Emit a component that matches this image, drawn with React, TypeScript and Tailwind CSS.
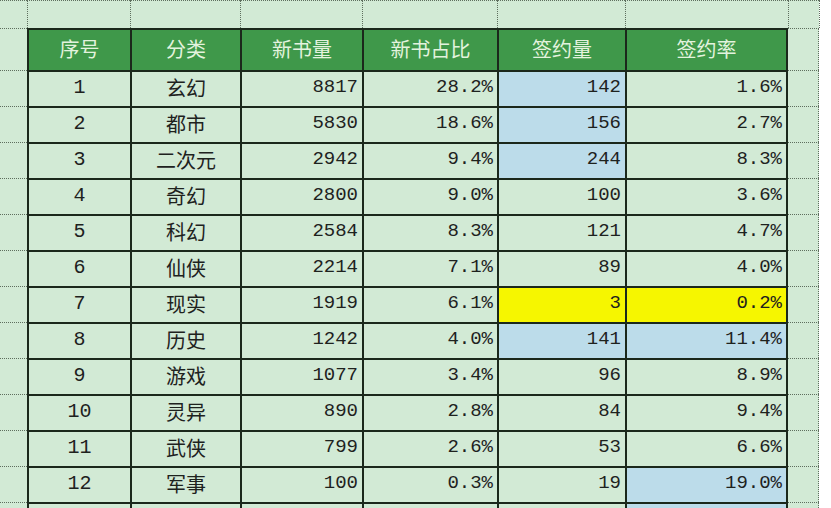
const ROWS = [
  { no: '1', cat: '玄幻', count: '8817', share: '28.2%', signed: '142', rate: '1.6%', signedBg: 'blue', rateBg: '' },
  { no: '2', cat: '都市', count: '5830', share: '18.6%', signed: '156', rate: '2.7%', signedBg: 'blue', rateBg: '' },
  { no: '3', cat: '二次元', count: '2942', share: '9.4%', signed: '244', rate: '8.3%', signedBg: 'blue', rateBg: '' },
  { no: '4', cat: '奇幻', count: '2800', share: '9.0%', signed: '100', rate: '3.6%', signedBg: '', rateBg: '' },
  { no: '5', cat: '科幻', count: '2584', share: '8.3%', signed: '121', rate: '4.7%', signedBg: '', rateBg: '' },
  { no: '6', cat: '仙侠', count: '2214', share: '7.1%', signed: '89', rate: '4.0%', signedBg: '', rateBg: '' },
  { no: '7', cat: '现实', count: '1919', share: '6.1%', signed: '3', rate: '0.2%', signedBg: 'yellow', rateBg: 'yellow' },
  { no: '8', cat: '历史', count: '1242', share: '4.0%', signed: '141', rate: '11.4%', signedBg: 'blue', rateBg: 'blue' },
  { no: '9', cat: '游戏', count: '1077', share: '3.4%', signed: '96', rate: '8.9%', signedBg: '', rateBg: '' },
  { no: '10', cat: '灵异', count: '890', share: '2.8%', signed: '84', rate: '9.4%', signedBg: '', rateBg: '' },
  { no: '11', cat: '武侠', count: '799', share: '2.6%', signed: '53', rate: '6.6%', signedBg: '', rateBg: '' },
  { no: '12', cat: '军事', count: '100', share: '0.3%', signed: '19', rate: '19.0%', signedBg: '', rateBg: 'blue' },
  { no: '', cat: '', count: '', share: '', signed: '', rate: '', signedBg: '', rateBg: 'blue' },
];

const HEADERS = ['序号', '分类', '新书量', '新书占比', '签约量', '签约率'];

const fill = (bg: string) =>
  bg === 'blue' ? 'bg-[#bcdcea]' : bg === 'yellow' ? 'bg-[#f6f600]' : 'bg-[#d2ead5]';

const mono = { fontFamily: '"Liberation Mono", "DejaVu Sans Mono", monospace' };

function Gutter() {
  return <div className="border-t border-dotted border-[#5e6e5e] bg-[#d2ead5]" />;
}

function Side() {
  return <div className="border-t border-r border-dotted border-[#5e6e5e] bg-[#d2ead5]" />;
}

function Cell({
  children,
  align = 'center',
  bg = '',
  last = false,
  num = false,
}: {
  children?: React.ReactNode;
  align?: 'center' | 'right';
  bg?: string;
  last?: boolean;
  num?: boolean;
}) {
  return (
    <div
      className={`flex items-center border-t-2 border-l-2 border-[#1b281b] text-[#1e221e] ${fill(bg)} ${
        last ? 'border-r-2' : ''
      } ${align === 'right' ? 'justify-end pr-[4px] text-[19px]' : 'justify-center text-[20px]'} pb-[3px]`}
      style={num ? mono : undefined}
    >
      {children}
    </div>
  );
}

export default function App() {
  return (
    <div
      className="grid h-[508px] w-[831px] overflow-hidden bg-white grid-cols-[27px_103px_110px_122px_135px_128px_163px_31px_12px] grid-rows-[28px_42px_repeat(12,36px)_6px]"
      style={{ fontFamily: '"Noto Sans CJK SC", "Noto Sans", sans-serif' }}
    >
      {/* top blank row */}
      <div className="border-t border-dotted border-[#5e6e5e] bg-[#d2ead5]" />
      {[0, 1, 2, 3, 4, 5, 6].map(i => (
        <div key={i} className="border-t border-l border-dotted border-[#5e6e5e] bg-[#d2ead5]" />
      ))}
      <div className="border-l border-dotted border-[#5e6e5e] bg-white" />

      {/* header */}
      <Gutter />
      {HEADERS.map((h, i) => (
        <div
          key={h}
          className={`flex items-center justify-center border-t-2 border-l-2 border-[#1b281b] bg-[#3f984a] pb-[2px] text-[20px] text-[#e3f3de] ${
            i === HEADERS.length - 1 ? 'border-r-2' : ''
          }`}
        >
          {h}
        </div>
      ))}
      <Side />
      <div className="bg-white" />

      {ROWS.map((r, idx) => (
        <div key={idx} className="contents">
          <Gutter />
          <Cell num>{r.no}</Cell>
          <Cell>{r.cat}</Cell>
          <Cell align="right" num>{r.count}</Cell>
          <Cell align="right" num>{r.share}</Cell>
          <Cell align="right" num bg={r.signedBg}>{r.signed}</Cell>
          <Cell align="right" num bg={r.rateBg} last>{r.rate}</Cell>
          <Side />
          <div className="bg-white" />
        </div>
      ))}
    </div>
  );
}
